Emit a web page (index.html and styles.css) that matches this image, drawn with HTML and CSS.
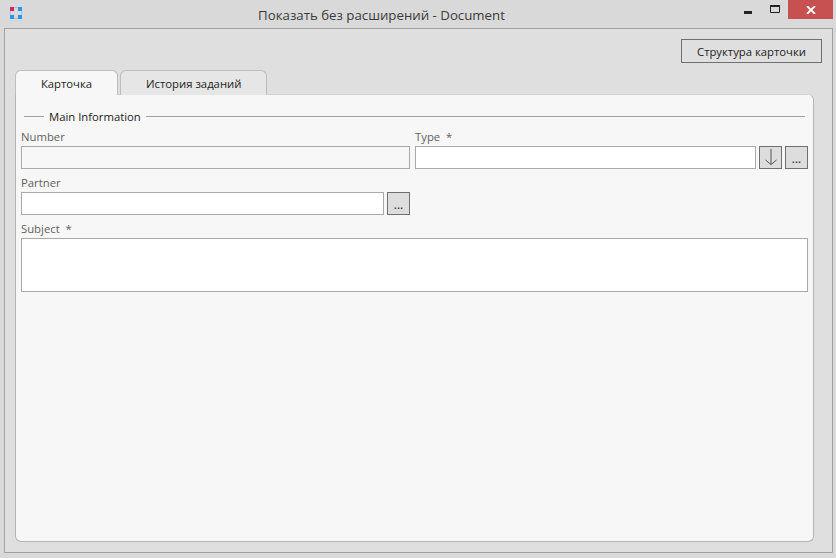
FILE: index.html
```html
<!DOCTYPE html>
<html lang="ru">
<head>
<meta charset="utf-8">
<title>Показать без расширений - Document</title>
<link rel="stylesheet" href="styles.css">
</head>
<body>
<div class="window">
  <header class="titlebar">
    <svg class="logo" width="12" height="12" viewBox="0 0 12 12">
      <rect x="0" y="0" width="4" height="4" fill="#e0205f"/>
      <rect x="8" y="0" width="4" height="4" fill="#2196f3"/>
      <rect x="0" y="8" width="4" height="4" fill="#2196f3"/>
      <rect x="8" y="8" width="4" height="4" fill="#2196f3"/>
      <path d="M4 .5H8M.5 4V8M4 11.5H8M11.5 4V8" stroke="#9ccbf0" fill="none"/>
    </svg>
    <div class="title">Показать без расширений - Document</div>
    <div class="controls">
      <svg class="ctl-min" width="8" height="3" viewBox="0 0 8 3"><rect width="8" height="3" fill="#222"/></svg>
      <svg class="ctl-max" width="10" height="8" viewBox="0 0 10 8"><path d="M.5 1V7.5H9.5V1" fill="none" stroke="#222"/><rect width="10" height="2" fill="#222"/></svg>
      <div class="ctl-close">
        <svg width="10" height="8" viewBox="0 0 10 8"><path d="M1 0 9 8M9 0 1 8" stroke="#fff" stroke-width="1.8"/></svg>
      </div>
    </div>
  </header>
  <main class="frame">
    <div class="toolbar"><button class="action">Структура карточки</button></div>
    <div class="tabs">
      <div class="tab active">Карточка</div>
      <div class="tab">История заданий</div>
    </div>
    <section class="panel">
      <div class="group"><span class="rule short"></span><span class="group-title">Main Information</span><span class="rule"></span></div>
      <div class="row">
        <div class="field half">
          <label class="label">Number</label>
          <div class="input readonly"></div>
        </div>
        <div class="field half">
          <label class="label">Type&nbsp; *</label>
          <div class="line">
            <div class="input grow"></div>
            <button class="mini"><svg width="14" height="17" viewBox="0 0 14 17"><path d="M7 0V15.5M1.5 11 7 15.5 12.5 11" fill="none" stroke="#555" stroke-width="1"/></svg></button>
            <button class="mini dots">...</button>
          </div>
        </div>
      </div>
      <div class="row">
        <div class="field half">
          <label class="label">Partner</label>
          <div class="line">
            <div class="input grow"></div>
            <button class="mini dots">...</button>
          </div>
        </div>
      </div>
      <div class="field">
        <label class="label">Subject&nbsp; *</label>
        <div class="input area"></div>
      </div>
    </section>
  </main>
</div>
</body>
</html>
```
FILE: styles.css
```css
* { box-sizing: border-box; }
html, body { margin: 0; height: 100%; }
body { font-family: "Open Sans", "Noto Sans", sans-serif; font-size: 11.3px; color: #222; background: #d9d9d9; overflow: hidden; }
.window { height: 558px; display: flex; flex-direction: column; padding: 0 3px 5px 4px; }
.titlebar { height: 28px; flex: none; display: flex; position: relative; }
.logo { position: absolute; left: 6px; top: 7px; }
.title { flex: 1; text-align: center; font-size: 13.25px; line-height: 30px; color: #3a3a3a; padding-right: 74px; }
.controls { position: absolute; right: 0; top: 0; display: flex; }
.ctl-min { position: absolute; right: 81px; top: 11px; }
.ctl-max { position: absolute; right: 53px; top: 5px; }
.ctl-close { width: 45px; height: 19px; background: #c75050; display: flex; align-items: center; justify-content: center; }
.frame { flex: 1; min-height: 0; background: #dfdfdf; border: 1px solid #a0a0a0; padding: 10px 10px 10px 10px; display: flex; flex-direction: column; }
.toolbar { display: flex; justify-content: flex-end; height: 31px; flex: none; }
.action { width: 141px; height: 24px; border: 1px solid #707070; background: #dfdfdf; font: inherit; color: #222; padding: 0; }
.tabs { display: flex; gap: 2px; height: 25px; flex: none; position: relative; margin-bottom: -1px; }
.tab { border: 1px solid #bdbdbd; border-bottom: 0; border-radius: 6px 6px 0 0; background: #e6e6e6; padding: 0 25px; line-height: 25px; color: #222; }
.tab.active { background: #f7f7f7; width: 103px; text-align: center; padding: 0; }
.panel { flex: 1; min-height: 0; margin-right: 8px; background: #f7f7f7; border: 1px solid #b4b4b4; border-top-color: #d4d4d4; border-radius: 0 6px 6px 6px; padding: 12px 5px 0 5px; }
.group { display: flex; align-items: center; height: 18px; gap: 5px; padding: 0 3px; margin-bottom: 1px; }
.rule { flex: 1; height: 1px; background: #a0a0a0; }
.rule.short { flex: none; width: 20px; }
.row { display: flex; gap: 5px; }
.half { flex: 1; min-width: 0; }
.row .half:first-child { flex: none; width: 389px; }
.field { display: flex; flex-direction: column; }
.label { height: 20px; line-height: 21px; color: #5f5f5f; flex: none; }
.line { display: flex; gap: 3px; }
.input { height: 23px; border: 1px solid #a9a9a9; background: #fff; margin-bottom: 3px; }
.input.grow { flex: 1; }
.input.readonly { background: #f7f7f7; }
.input.area { height: 54px; }
.mini { width: 23px; height: 23px; border: 1px solid #707070; background: #dddddd; padding: 0; display: flex; align-items: center; justify-content: center; font: inherit; font-weight: 600; color: #333; line-height: 1; }
.dots { padding-top: 3px; }
```
